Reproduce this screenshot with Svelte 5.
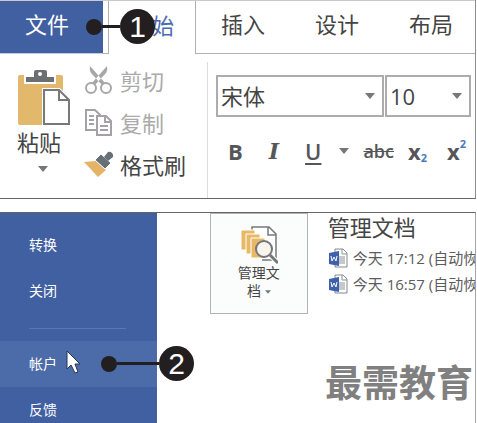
<script lang="ts">
  const tabs = ['插入', '设计', '布局'];
  const recovered = ['今天 17:12 (自动恢复)', '今天 16:57 (自动恢复)'];

  let font = '宋体';
  let size = '10';
</script>

{#snippet caret()}
  <svg class="caret" viewBox="0 0 10 6" aria-hidden="true"><path d="M0 0h10L5 6z" /></svg>
{/snippet}

<div class="screen">
  <section class="ribbon">
    <nav class="tabs">
      <button class="tab file">文件</button>
      <span class="tab-gap"></span>
      <button class="tab active">开始</button>
      {#each tabs as tab}
        <button class="tab">{tab}</button>
      {/each}
      <span class="tab-rest"></span>
    </nav>

    <div class="groups">
      <div class="clipboard">
        <button class="paste">
          <svg class="paste-icon" viewBox="0 0 54 57" aria-hidden="true">
            <rect x="1" y="6" width="45" height="50" rx="2" fill="#e2b96c" />
            <path d="M8 14V7h8V3q0-3 3-3h9q3 0 3 3v4h7v7z" fill="#6d6e72" stroke="#fff" stroke-width="2" />
            <circle cx="23" cy="5" r="2" fill="#fff" />
            <path d="M25 19h18l10 11v26H25z" fill="#fff" />
            <path d="M27 21h15l10 10v24H27zM42 21v10h10" fill="#fff" stroke="#77787c" stroke-width="2" />
          </svg>
          <span>粘贴</span>
          {@render caret()}
        </button>

        <div class="commands">
          <button class="command" disabled>
            <svg viewBox="0 0 30 30" aria-hidden="true">
              <g fill="none" stroke="#a7a7a9" stroke-width="2">
                <circle cx="7" cy="22" r="5" />
                <circle cx="22" cy="22" r="5" />
              </g>
              <path d="M6 0q-1 4 1 7l11 12 3-2zM23 0q1 4-1 7L11 19l-3-2z" fill="#a7a7a9" />
            </svg>
            <span>剪切</span>
          </button>
          <button class="command" disabled>
            <svg viewBox="0 0 30 30" aria-hidden="true">
              <g fill="#fff" stroke="#a4a2a8" stroke-width="2">
                <path d="M2 2h9l5 5v15H2z" />
                <path d="M13 8h9l5 5v14H13z" />
                <path d="M21 8v6h6M5 8h5M5 12h5M5 16h5M16 18h8M16 22h8" fill="none" />
              </g>
            </svg>
            <span>复制</span>
          </button>
          <button class="command">
            <svg viewBox="0 0 30 30" aria-hidden="true">
              <path d="M0 12l12-1 10 9-8 7z" fill="#e5b367" />
              <path d="M11 10l6-6 10 9-6 6z" fill="#686f77" stroke="#fff" />
              <path d="M20 7l4-5a4 4 0 0 1 5 5l-5 4z" fill="#686f77" />
            </svg>
            <span>格式刷</span>
          </button>
        </div>
      </div>

      <div class="font-group">
        <div class="pickers">
          <label class="picker font-name">
            <select bind:value={font} aria-label="字体">
              <option>宋体</option>
              <option>黑体</option>
            </select>
            {@render caret()}
          </label>
          <label class="picker font-size">
            <select bind:value={size} aria-label="字号">
              <option>10</option>
              <option>12</option>
            </select>
            {@render caret()}
          </label>
        </div>
        <div class="formats">
          <button class="format bold">B</button>
          <button class="format italic">I</button>
          <button class="format underline">U</button>
          <button class="format more" aria-label="下划线样式">{@render caret()}</button>
          <button class="format strike">abc</button>
          <button class="format script">x<sub>2</sub></button>
          <button class="format script">x<sup>2</sup></button>
        </div>
      </div>
    </div>

    <div class="callout first"><i class="dot"></i><i class="line"></i><b>1</b></div>
  </section>

  <section class="backstage">
    <nav class="sidebar">
      <button>转换</button>
      <button>关闭</button>
      <hr />
      <button class="hover">帐户</button>
      <button>反馈</button>
    </nav>

    <main class="info">
      <button class="manage">
        <svg class="manage-icon" viewBox="0 0 38 38" aria-hidden="true">
          <path d="M12 5V1h17l7 7v26H22" fill="#fff" stroke="#77787b" stroke-width="1.5" />
          <path d="M28 1v8h8" fill="none" stroke="#77787b" stroke-width="1.5" />
          <g fill="#e7b966" stroke="#fff">
            <path d="M1 4h14v20H1z" />
            <path d="M6 8h14v20H6z" />
            <path d="M11 12h14v20H11z" />
          </g>
          <path d="M29 28l9 9" stroke="#fff" stroke-width="5" />
          <circle cx="24" cy="23" r="8" fill="#f8f5ec" stroke="#75767a" stroke-width="2" />
          <path d="M30 29l8 8" stroke="#75767a" stroke-width="3" />
        </svg>
        <span>管理文<br />档 {@render caret()}</span>
      </button>

      <div class="versions">
        <h2>管理文档</h2>
        <ul>
          {#each recovered as name}
            <li>
              <svg class="word-icon" viewBox="0 0 20 20" aria-hidden="true">
                <path d="M7 1h8l4 4v14H7z" fill="#fff" stroke="#85888e" />
                <path d="M14 1v5h5M11 9h6M11 11h6M11 13h6M11 15h6" fill="none" stroke="#8d9299" />
                <path d="M1 5l10-2v15L1 16z" fill="#3d62ab" />
                <path d="M3 8l1 5 2-4 2 4 1-5" fill="none" stroke="#fff" />
              </svg>
              <a href="#recovered">{name}</a>
            </li>
          {/each}
        </ul>
      </div>
    </main>

    <svg class="cursor" viewBox="0 0 15 24" aria-hidden="true">
      <path d="M1 1v18l4-4 4 8 3-1-3-8h5z" fill="#fff" stroke="#26345a" />
    </svg>
    <div class="callout second"><i class="dot"></i><i class="line"></i><b>2</b></div>
    <div class="watermark">最需教育</div>
  </section>
</div>

<style>
  :global(body) {
    background: #fff;
    overflow: hidden;
  }

  .screen {
    height: 100vh;
    display: flex;
    flex-direction: column;
    gap: 13px;
    padding-right: 1px;
    box-sizing: border-box;
    font-family: 'Open Sans', 'Noto Sans CJK SC', sans-serif;
    color: #444;
  }

  button,
  select {
    font: inherit;
    color: inherit;
    background: none;
    border: 0;
    padding: 0;
    margin: 0;
    white-space: nowrap;
  }

  .caret {
    width: 10px;
    height: 6px;
    fill: #77777a;
  }

  .ribbon {
    position: relative;
    border-right: 1px solid #8c8c8e;
    border-bottom: 1px solid #666;
    font-size: 22px;
    line-height: 32px;
    overflow: hidden;
    flex-shrink: 0;
  }

  .tabs {
    display: flex;
    height: 54px;
    border-top: 1px solid #c9c9cb;
    box-sizing: border-box;
  }

  .tab {
    flex-shrink: 0;
    box-sizing: border-box;
    padding: 0 25px 6px;
    border-bottom: 1px solid #b1b1b3;
  }

  .tab.file {
    padding-right: 34px;
    background: #4160a2;
    color: #fff;
    border-color: #c4cadb;
  }

  .tab.active {
    padding: 0 21px 6px;
    border: 1px solid #b1b1b3;
    border-width: 0 1px;
    color: #4a6bb0;
  }

  .tab-gap {
    flex-shrink: 0;
    width: 5px;
    border-bottom: 1px solid #b1b1b3;
  }

  .tab-rest {
    flex: 1;
    border-bottom: 1px solid #b1b1b3;
  }

  .groups {
    display: flex;
    height: 144px;
    padding-top: 8px;
    box-sizing: border-box;
  }

  .clipboard {
    display: flex;
    gap: 14px;
    padding-left: 17px;
    width: 208px;
    box-sizing: border-box;
    border-right: 1px solid #dcdcde;
  }

  .paste {
    width: 53px;
    display: flex;
    flex-direction: column;
    align-items: flex-start;
    padding-top: 7px;
  }

  .paste-icon {
    width: 54px;
    height: 57px;
  }

  .paste .caret {
    margin: 8px 0 0 21px;
  }

  .commands {
    display: flex;
    flex-direction: column;
  }

  .command {
    display: flex;
    align-items: center;
    gap: 6px;
    height: 42px;
    padding-bottom: 4px;
    box-sizing: border-box;
  }

  .command:disabled {
    color: #aaa;
  }

  .command svg {
    width: 30px;
    height: 30px;
  }

  .font-group {
    flex: 1;
    padding: 13px 4px 0 8px;
    min-width: 0;
  }

  .pickers {
    display: flex;
    gap: 1px;
  }

  .picker {
    display: grid;
    align-items: center;
    height: 42px;
    box-sizing: border-box;
    border: 2px solid #adadaf;
  }

  .picker select,
  .picker .caret {
    grid-area: 1 / 1;
  }

  .picker select {
    appearance: none;
    width: 100%;
    padding-left: 3px;
  }

  .picker .caret {
    justify-self: end;
    margin-right: 7px;
    pointer-events: none;
  }

  .font-name {
    flex: 2;
  }

  .font-size {
    flex: 1;
  }

  .formats {
    display: flex;
    align-items: center;
    gap: 14px;
    padding: 18px 0 0 12px;
    color: #55565a;
  }

  .format {
    display: flex;
    align-items: center;
    height: 32px;
  }

  .bold {
    font-weight: 700;
  }

  .italic {
    font-family: 'DejaVu Serif', serif;
    font-style: italic;
    font-weight: 700;
    font-size: 22px;
    padding-left: 12px;
  }

  .underline {
    font-weight: 600;
    text-decoration: underline;
    text-decoration-thickness: 2px;
    text-underline-offset: 3px;
    padding-left: 12px;
  }

  .more {
    padding-left: 4px;
  }

  .strike {
    font-size: 18px;
    font-weight: 600;
    text-decoration: line-through;
  }

  .script {
    height: 26px;
    font-weight: 700;
  }

  .script + .script {
    padding-left: 6px;
  }

  .script sub,
  .script sup {
    font-size: 11px;
    line-height: 12px;
    color: #4a7ab8;
  }

  .script sub {
    align-self: flex-end;
  }

  .script sup {
    align-self: flex-start;
  }

  .backstage {
    position: relative;
    flex: 1;
    min-height: 0;
    display: flex;
    border-top: 1px solid #666;
    border-right: 1px solid #a5a5a7;
    overflow: hidden;
  }

  .sidebar {
    width: 33%;
    flex-shrink: 0;
    display: flex;
    flex-direction: column;
    padding-top: 9px;
    box-sizing: border-box;
    background: #4160a2;
    color: #fff;
    font-size: 14px;
    line-height: 20px;
  }

  .sidebar button {
    height: 46px;
    flex-shrink: 0;
    padding-left: 29px;
    text-align: left;
  }

  .sidebar .hover {
    background: #4b6ba9;
  }

  .sidebar hr {
    width: 97px;
    margin: 14px 0 12px 29px;
    border: 0;
    border-top: 1px solid #5b77b1;
  }

  .info {
    flex: 1;
    min-width: 0;
    display: flex;
    align-items: flex-start;
    gap: 20px;
    padding-left: 53px;
  }

  .manage {
    width: 98px;
    height: 101px;
    flex-shrink: 0;
    box-sizing: border-box;
    display: flex;
    flex-direction: column;
    align-items: center;
    padding-top: 12px;
    border: 1px solid #b3b3b5;
    background: #fbfdfd;
    font-size: 14px;
    line-height: 18px;
  }

  .manage-icon {
    width: 38px;
    height: 38px;
  }

  .manage .caret {
    width: 6px;
    height: 4px;
    vertical-align: middle;
  }

  .versions {
    flex: 1;
    min-width: 0;
    overflow: hidden;
  }

  .versions h2 {
    margin: 0 0 4px;
    font-size: 22px;
    font-weight: 400;
    line-height: 28px;
  }

  .versions ul {
    margin: 0;
    padding: 0;
    list-style: none;
  }

  .versions li {
    display: flex;
    align-items: center;
    gap: 5px;
    height: 26px;
    font-size: 15px;
    line-height: 20px;
    white-space: nowrap;
  }

  .versions a {
    color: #5c5c5e;
    text-decoration: none;
  }

  .word-icon {
    width: 20px;
    height: 20px;
    flex-shrink: 0;
  }

  .callout {
    position: absolute;
    display: flex;
    align-items: center;
    pointer-events: none;
  }

  .callout.first {
    left: 86px;
    top: 9px;
    width: 69px;
  }

  .callout.second {
    left: 101px;
    top: 133px;
    width: 93px;
  }

  .callout .dot {
    width: 16px;
    height: 16px;
    border-radius: 50%;
    background: #231f20;
  }

  .callout .line {
    flex: 1;
    height: 3px;
    background: #231f20;
  }

  .callout b {
    width: 35px;
    height: 35px;
    border-radius: 50%;
    background: #231f20;
    color: #fff;
    font-family: 'Liberation Sans', sans-serif;
    font-size: 30px;
    font-weight: 400;
    line-height: 35px;
    text-align: center;
  }

  .cursor {
    position: absolute;
    left: 66px;
    top: 137px;
    width: 15px;
    height: 24px;
  }

  .watermark {
    position: absolute;
    right: 2px;
    bottom: 18px;
    color: #808080;
    font-family: 'Noto Sans CJK SC', sans-serif;
    font-size: 37px;
    font-weight: 700;
    line-height: 48px;
  }
</style>
